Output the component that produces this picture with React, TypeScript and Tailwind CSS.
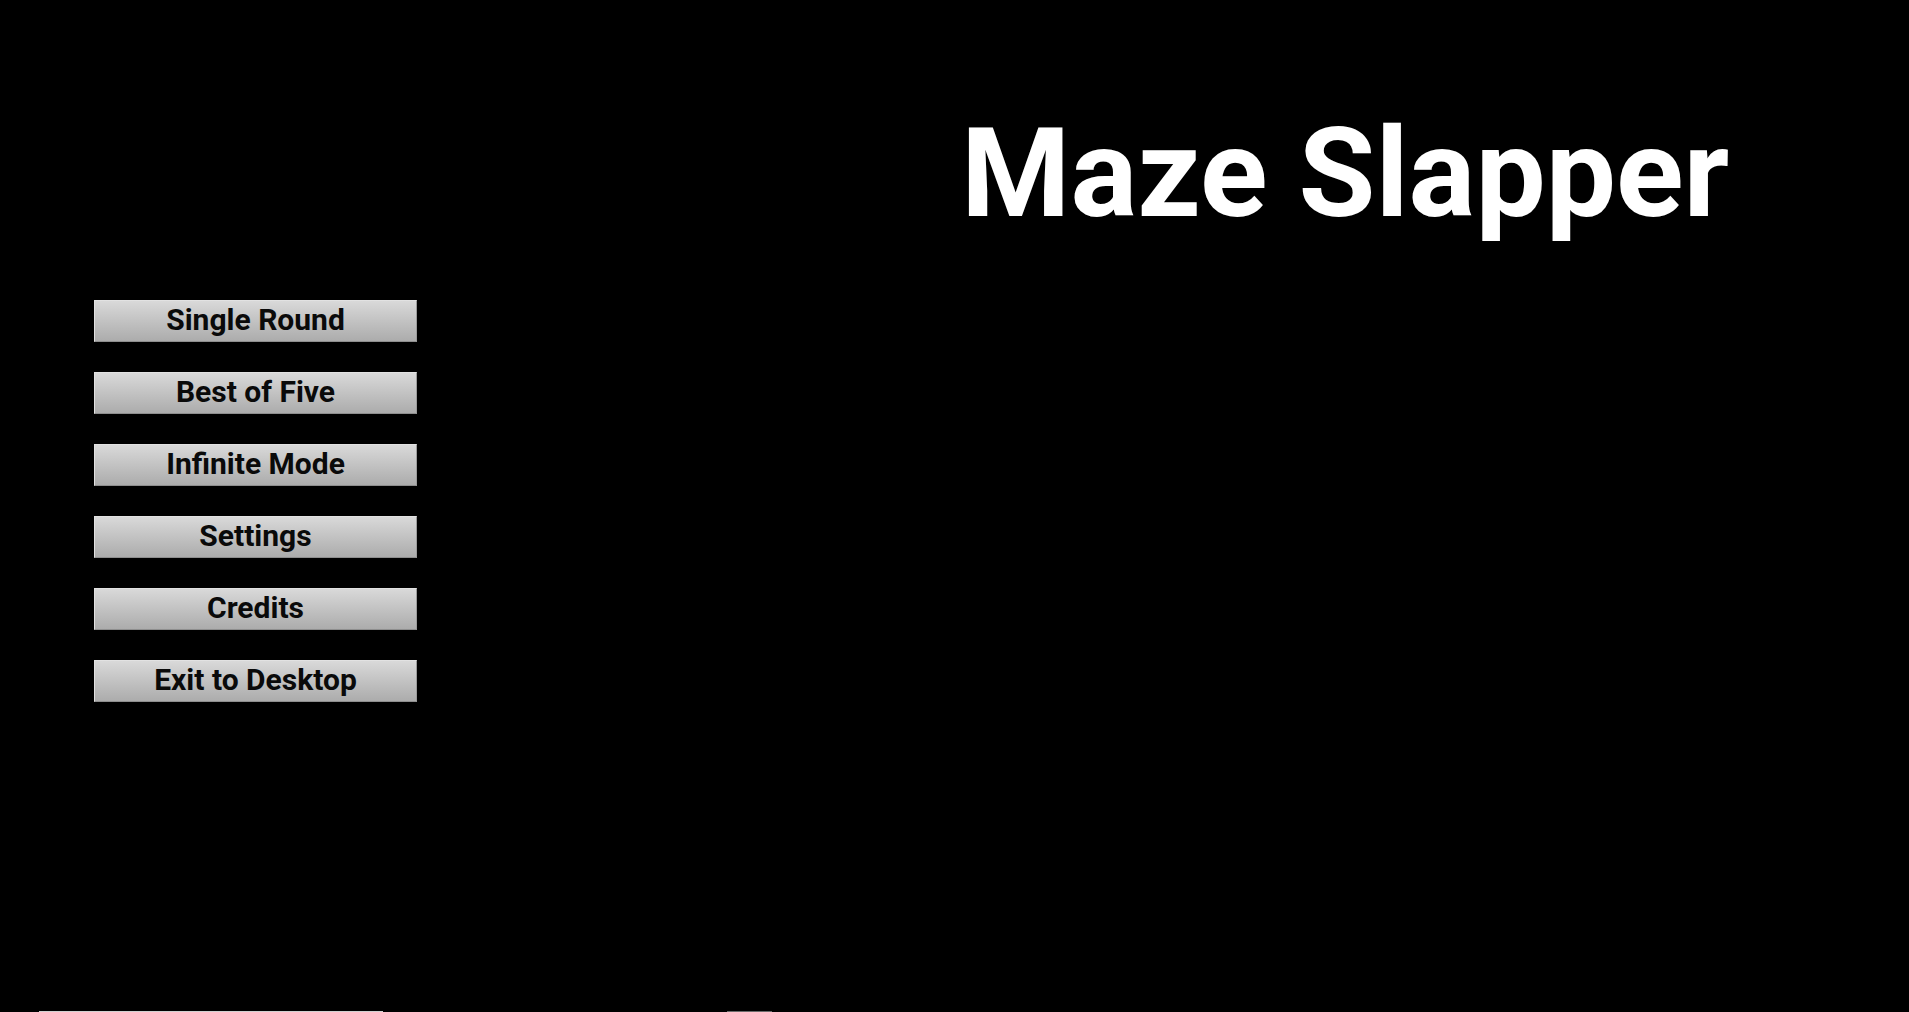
import React from 'react';

const menuItems = ['Single Round', 'Best of Five', 'Infinite Mode', 'Settings', 'Credits', 'Exit to Desktop'];

const MenuButton: React.FC<{ label: string }> = ({ label }) => (
    <button
        className="w-[323px] h-[42px] pb-[2px] flex items-center justify-center border-t border-l border-[#e2e2e2] border-r border-r-[#9a9a9a] border-b border-b-[#8e8e8e] bg-gradient-to-b from-[#d9d9d9] to-[#acacac] text-[30px] font-bold text-[#0a0a0a] leading-none"
        style={{ fontFamily: 'Roboto, "Liberation Sans", sans-serif' }}
    >
        {label}
    </button>
);

export default function App() {
    return (
        <div className="relative w-full h-screen bg-black overflow-hidden">
            <div className="h-[300px] pl-[961px] pt-[111px]">
                <h1
                    className="text-[125px] leading-none font-bold text-white whitespace-nowrap"
                    style={{ fontFamily: 'Roboto, "Liberation Sans", sans-serif' }}
                >
                    Maze Slapper
                </h1>
            </div>
            <div className="flex flex-col gap-[30px] pl-[94px]">
                {menuItems.map(item => (
                    <MenuButton key={item} label={item} />
                ))}
            </div>
            {/* edges of panels peeking in from below */}
            <div className="absolute bottom-0 left-[39px] w-[344px] h-px bg-[#d0d0d0]" />
            <div className="absolute bottom-0 left-[727px] w-[45px] h-px bg-[#6a6a6a]" />
        </div>
    );
}
